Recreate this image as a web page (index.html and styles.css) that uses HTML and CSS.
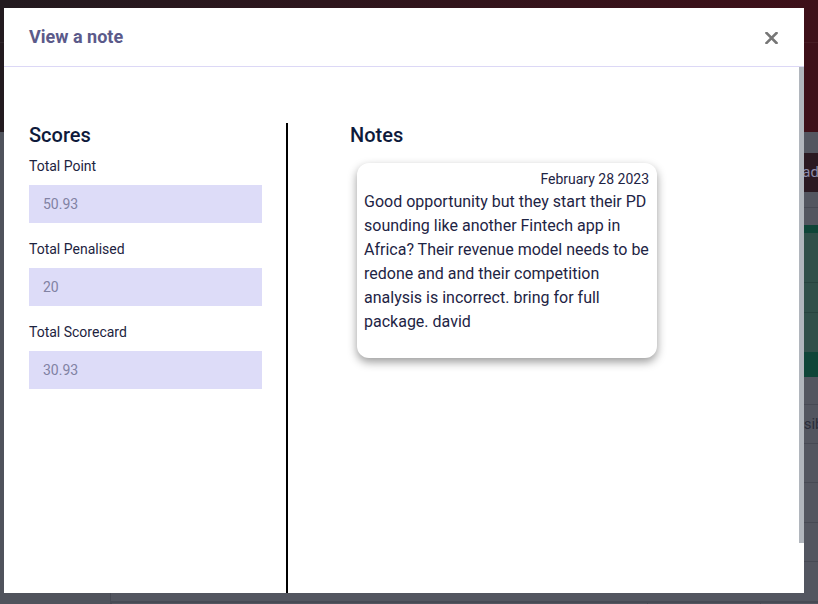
FILE: index.html
```html
<!DOCTYPE html>
<html lang="en">
<head>
<meta charset="utf-8">
<title>View a note</title>
<link rel="stylesheet" href="styles.css">
</head>
<body>
<div class="app">
  <div class="app-header">
    <div class="app-topbar"></div>
  </div>
  <div class="app-body">
    <aside class="app-side"></aside>
    <main class="app-main">
      <div class="row r-plain h21"></div>
      <div class="row r-dark h39"><span class="cell c1"></span><span class="cell c2"></span><span class="cell c3 btn-text">Upload</span></div>
      <div class="row r-plain h16 line"></div>
      <div class="row r-plain h17"></div>
      <div class="row r-green-dark h8"></div>
      <div class="row r-green h50 line"></div>
      <div class="row r-green h30 line"></div>
      <div class="row r-green h39"></div>
      <div class="row r-green-dark h25"></div>
      <div class="row r-plain h28 line"></div>
      <div class="row r-plain h39 line"><span class="cell c1"></span><span class="cell c2"></span><span class="cell c3 row-text">Possible</span></div>
      <div class="row r-plain h39 line"></div>
      <div class="row r-plain h40 line"></div>
      <div class="row r-plain h39 line"></div>
      <div class="row r-plain h40 line"></div>
      <div class="row r-plain h40 cols"><span class="cell c1"></span><span class="cell c2"></span><span class="cell c3"></span></div>
    </main>
  </div>
</div>

<div class="modal">
  <div class="modal-header">
    <h2 class="modal-title">View a note</h2>
    <button class="modal-close" type="button" aria-label="Close">
      <svg width="13" height="12" viewBox="0 0 13 12"><path d="M1.5 1 L11.5 11 M11.5 1 L1.5 11" stroke="#767676" stroke-width="2.6" stroke-linecap="square" fill="none"/></svg>
    </button>
  </div>
  <div class="modal-body">
    <section class="col-scores">
      <h3 class="section-title">Scores</h3>
      <div class="field">
        <label class="field-label">Total Point</label>
        <div class="field-box">50.93</div>
      </div>
      <div class="field">
        <label class="field-label">Total Penalised</label>
        <div class="field-box">20</div>
      </div>
      <div class="field">
        <label class="field-label">Total Scorecard</label>
        <div class="field-box">30.93</div>
      </div>
    </section>
    <section class="col-notes">
      <h3 class="section-title">Notes</h3>
      <div class="note-card">
        <div class="note-date">February 28 2023</div>
        <p class="note-text">Good opportunity but they start their PD sounding like another Fintech app in Africa? Their revenue model needs to be redone and and their competition analysis is incorrect. bring for full package. david</p>
      </div>
    </section>
    <div class="scroll-thumb"></div>
  </div>
</div>
</body>
</html>
```

FILE: styles.css
```css
* { box-sizing: border-box; }
html, body { margin: 0; padding: 0; }
body {
  width: 818px;
  height: 604px;
  overflow: hidden;
  font-family: Roboto, "Liberation Sans", Arial, sans-serif;
  background: #50535c;
}

/* backdrop page (dimmed) */
.app { display: flex; flex-direction: column; height: 604px; overflow: hidden; }
.app-header {
  flex: none;
  height: 132px;
  background: linear-gradient(to right, #231a1f 0%, #2e161d 40%, #3e1019 100%);
}
.app-topbar { height: 43px; border-bottom: 1px solid rgba(255,255,255,0.05); }
.app-body { display: flex; flex: none; height: 472px; overflow: hidden; }
.app-side { flex: none; width: 111px; background: #50535c; border-right: 1px solid #474a54; }
.app-main { flex: 1; min-width: 0; display: flex; flex-direction: column; }
.row { display: flex; flex: none; }
.line { border-bottom: 1px solid #474a54; }
.r-plain { background: #535660; }
.r-dark { background: #2b1a22; }
.r-green-dark { background: #0f4538; }
.r-green { background: #304f49; }
.r-green.line { border-bottom-color: #27433e; }
.h8 { height: 8px; } .h16 { height: 16px; } .h17 { height: 17px; }
.h21 { height: 21px; } .h25 { height: 25px; } .h28 { height: 28px; }
.h30 { height: 30px; } .h39 { height: 39px; } .h40 { height: 40px; }
.h50 { height: 50px; }
.cell { display: block; flex: none; }
.c1 { width: 536px; }
.c2 { width: 113px; }
.c3 { flex: 1; min-width: 0; overflow: hidden; }
.cols .cell { border-left: 1px solid #474a54; border-top: 1px solid #474a54; }
.btn-text {
  color: #8c8ba8;
  font-size: 15px;
  line-height: 39px;
  padding-left: 12px;
  white-space: nowrap;
}
.row-text {
  color: #2b2e3b;
  font-size: 15px;
  line-height: 39px;
  white-space: nowrap;
  padding-left: 18px;
}

/* modal */
.modal {
  position: fixed;
  left: 4px;
  top: 8px;
  width: 800px;
  height: 585px;
  background: #fff;
  display: flex;
  flex-direction: column;
}
.modal-header {
  height: 59px;
  flex: none;
  display: flex;
  align-items: center;
  justify-content: space-between;
  padding: 0 26px 0 25px;
  border-bottom: 1px solid #dcd8f6;
}
.modal-title {
  margin: 0;
  font-size: 18px;
  font-weight: 700;
  color: #5b5a8a;
  line-height: 58px;
}
.modal-close {
  border: 0;
  background: none;
  padding: 0;
  width: 13px;
  height: 12px;
  display: flex;
  margin-top: 1px;
}
.modal-body {
  position: relative;
  flex: 1;
  display: flex;
  padding-top: 56px;
  overflow: hidden;
}
.scroll-thumb {
  position: absolute;
  right: 0;
  top: 0;
  width: 5px;
  height: 476px;
  background: #b1b6bd;
}
.col-scores {
  width: 284px;
  flex: none;
  padding: 0 24px 0 25px;
  border-right: 2px solid #000;
}
.col-notes {
  flex: 1;
  padding-left: 62px;
}
.section-title {
  margin: 0 0 9px;
  font-size: 20px;
  font-weight: 500;
  line-height: 24px;
  color: #0e1a3b;
}
.field { margin-bottom: 16px; }
.field-label {
  display: block;
  font-size: 14px;
  line-height: 21px;
  color: #1d2340;
  margin-bottom: 8px;
}
.field-box {
  height: 38px;
  background: #dddcf8;
  color: #8182a3;
  font-size: 14px;
  line-height: 38px;
  padding-left: 14px;
}
.note-card {
  width: 300px;
  margin: 16px 0 0 7px;
  padding: 6px 8px 8px 7px;
  background: #fff;
  border-radius: 12px;
  box-shadow: 0 4px 10px rgba(0,0,0,0.4);
  color: #1e2444;
}
.note-date {
  text-align: right;
  font-size: 14px;
  line-height: 21px;
}
.note-text {
  margin: 0 0 16px;
  font-size: 16px;
  line-height: 24px;
}
```
